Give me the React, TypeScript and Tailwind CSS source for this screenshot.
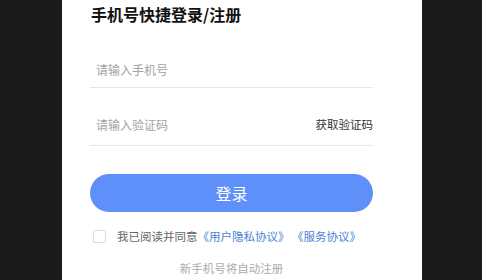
import React from 'react'

const font = { fontFamily: '"Noto Sans CJK SC", "Noto Sans", sans-serif' }

export default function App() {
  return (
    <div className="w-[482px] h-[280px] overflow-hidden bg-[#1b1b1b] pl-[62px]" style={font}>
      <div className="w-[360px] h-full bg-white pl-[28px]">
        <div className="w-[283px] flex flex-col">
          {/* Title */}
          <h1 className="h-[28px] leading-[28px] text-[16px] font-bold text-[#111] pl-[1px]">
            手机号快捷登录/注册
          </h1>

          {/* Phone */}
          <div className="mt-[24px] h-[36px] flex items-center border-b border-[#e6e6e6] pl-[6px]">
            <input
              className="flex-1 bg-transparent outline-none text-[12px] text-[#333] placeholder:text-[#a3a3a3]"
              placeholder="请输入手机号"
            />
          </div>

          {/* Code */}
          <div className="mt-[16px] h-[42px] flex items-center border-b border-[#e6e6e6] pl-[6px]">
            <input
              className="flex-1 min-w-0 bg-transparent outline-none text-[12px] text-[#333] placeholder:text-[#a3a3a3]"
              placeholder="请输入验证码"
            />
            <span className="text-[11.5px] text-[#333]">获取验证码</span>
          </div>

          {/* Login button */}
          <button className="mt-[28px] h-[38px] rounded-full bg-[#5f8ff8] text-white text-[16px]">
            登录
          </button>

          {/* Agreement */}
          <div className="mt-[17px] h-[14px] flex items-center ml-[3px] text-[11.5px] leading-[14px]">
            <span className="w-[13px] h-[13px] rounded-[2px] border border-[#dcdcdc] bg-white" />
            <span className="ml-[11px] text-[#666]">我已阅读并同意</span>
            <span className="text-[#4b7fd6]">《用户隐私协议》 《服务协议》</span>
          </div>

          {/* Footer */}
          <p className="mt-[17px] text-center text-[11.5px] leading-[16px] text-[#ababab]">新手机号将自动注册</p>
        </div>
      </div>
    </div>
  )
}
